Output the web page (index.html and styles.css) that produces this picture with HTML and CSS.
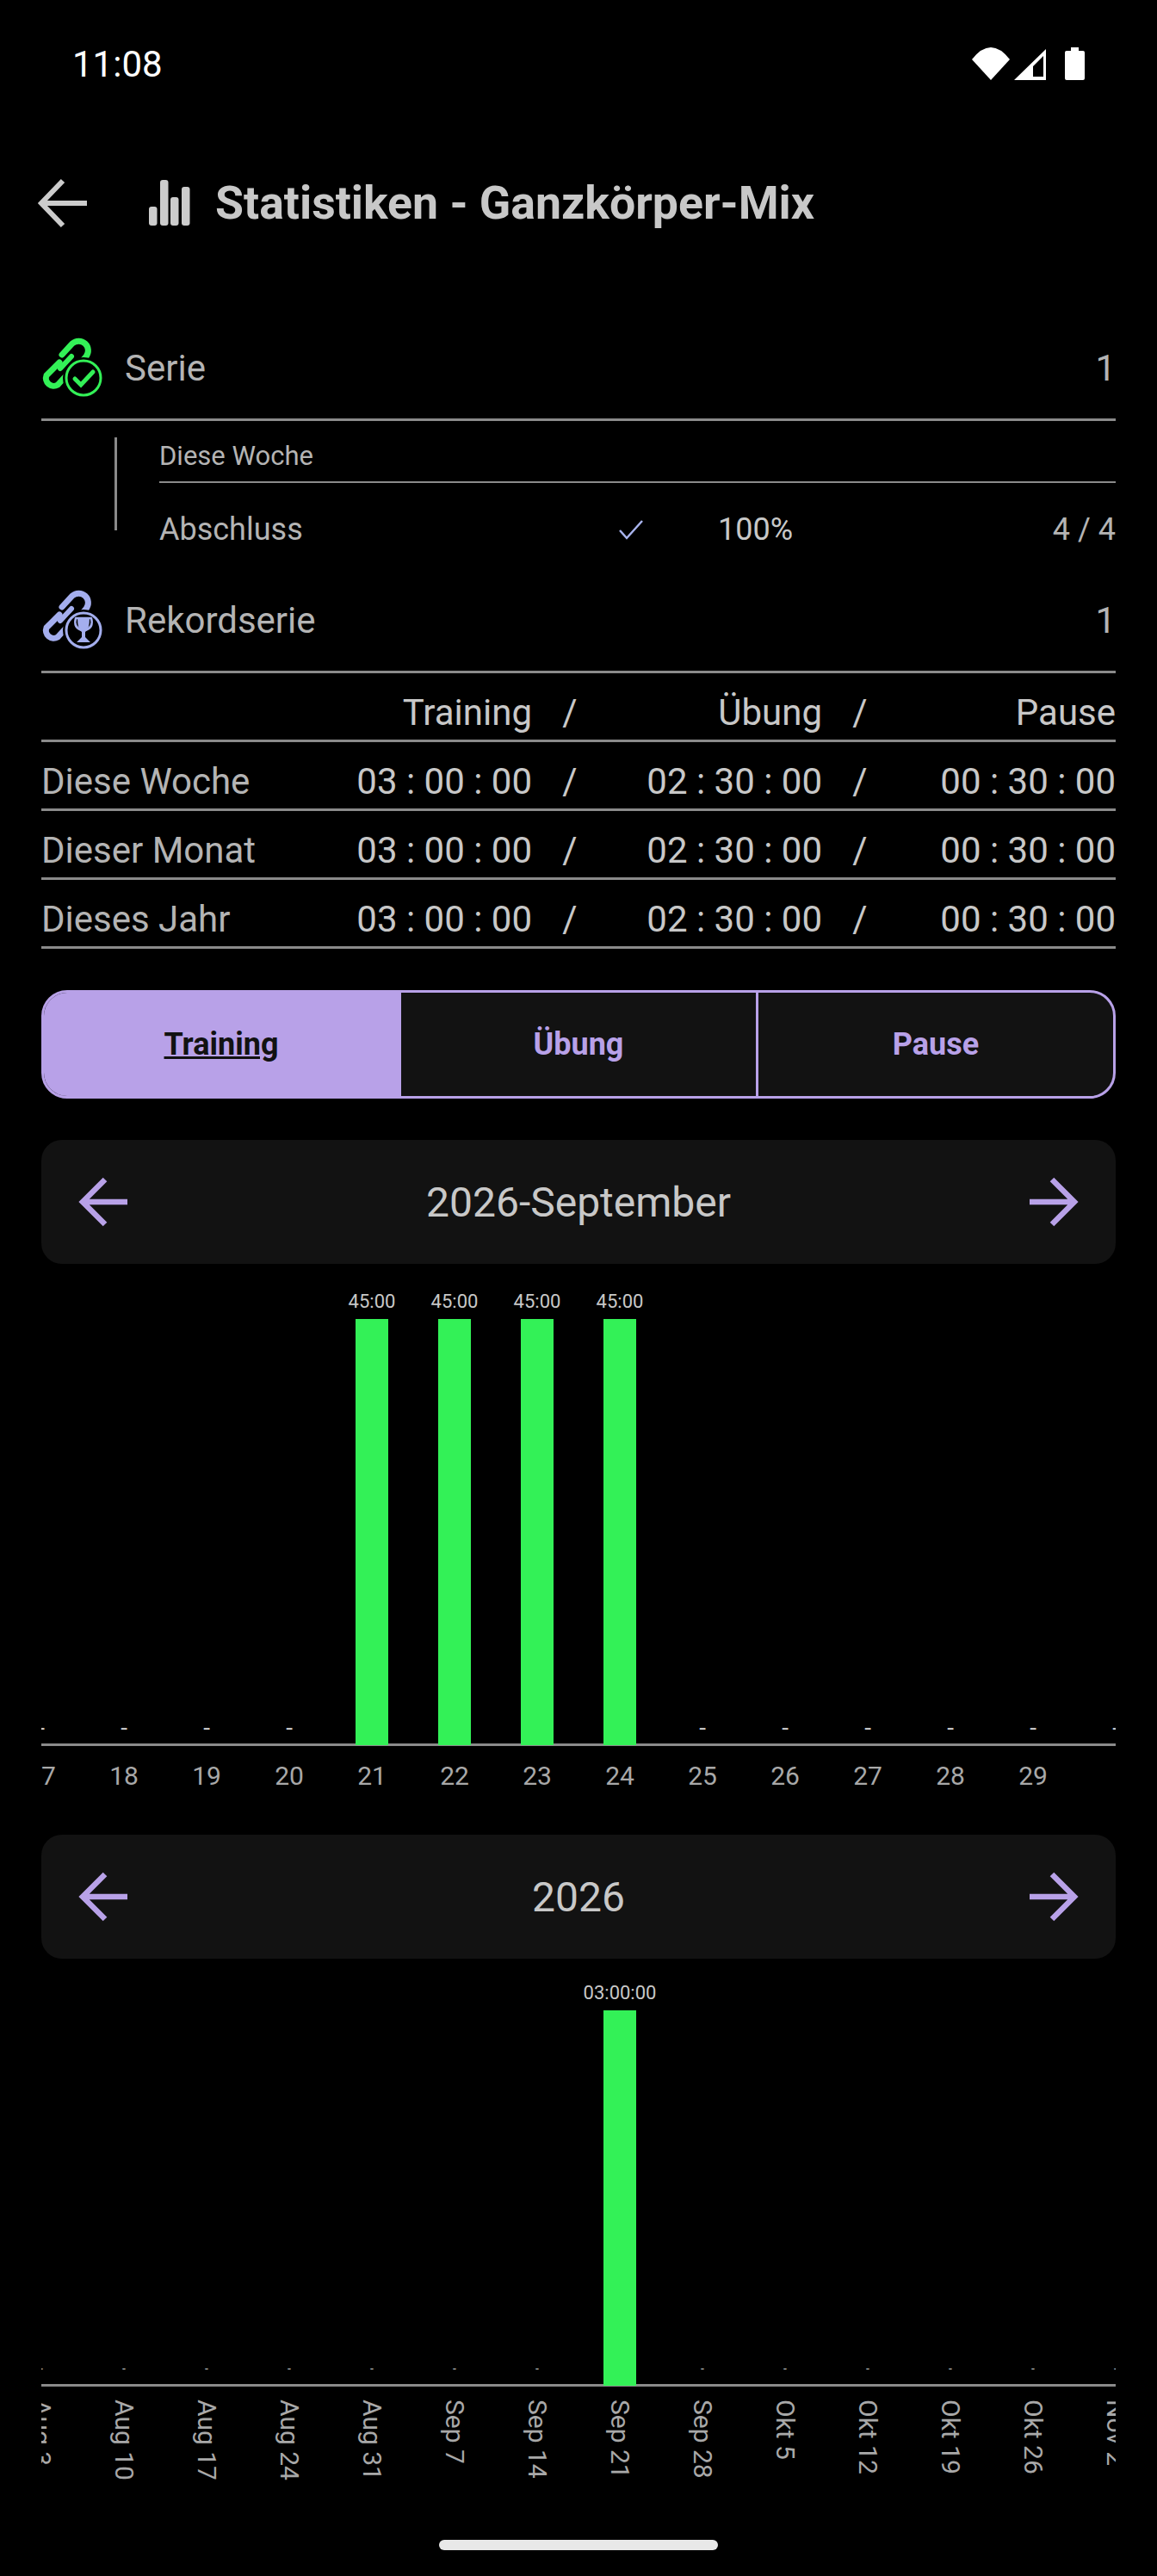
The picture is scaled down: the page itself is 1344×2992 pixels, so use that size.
FILE: index.html
```html
<!DOCTYPE html>
<html lang="de">
<head>
  <meta charset="UTF-8">
  <title>Statistiken - Ganzkörper-Mix</title>
  <link rel="stylesheet" href="styles.css">
</head>
<body>

  <!-- Statusleiste -->
  <div class="status-bar">
    <span class="clock">11:08</span>
    <svg class="status-icons" width="131" height="38" viewBox="0 0 131 38">
      <path d="M0 14 Q22 -14 44 14 L22 38 Z" fill="#fff"/>
      <path d="M49 38 L86 2 V38 Z M83 34 V10 L71 22 V34 Z" fill="#fff" fill-rule="evenodd"/>
      <path d="M115 0 H124 V4 H129 Q131 4 131 6 V36 Q131 38 129 38 H110 Q108 38 108 36 V6 Q108 4 110 4 H115 Z" fill="#fff"/>
    </svg>
  </div>

  <!-- Titel -->
  <div class="top-bar">
    <svg class="back" width="60" height="58" viewBox="0 0 60 58">
      <path d="M59 29 H7 M31 3 L6 29 L31 55" fill="none" stroke="#cccccc" stroke-width="6"/>
    </svg>
    <svg class="title-icon" width="48" height="56" viewBox="0 0 48 56">
      <rect x="0" y="32" width="9.5" height="22" rx="3" fill="#cccccc"/>
      <rect x="13" y="1" width="9.5" height="53" rx="3" fill="#cccccc"/>
      <rect x="25" y="21" width="9.5" height="33" rx="3" fill="#cccccc"/>
      <rect x="38" y="9" width="9.5" height="45" rx="3" fill="#cccccc"/>
    </svg>
    <h1>Statistiken - Ganzkörper-Mix</h1>
  </div>

  <div class="content">

    <div class="stat-row first-row">
      <svg class="stat-icon" width="72" height="70" viewBox="0 0 72 70">
        <g fill="none" stroke="#33f157" stroke-linecap="round">
          <path d="M24 20 L36 7 A11 11 0 0 1 52 22 L41 35" stroke-width="7"/>
          <path d="M21 29 L6 44 A9 9 0 0 0 19 55 L30 43" stroke-width="7"/>
          <path d="M22 36 L35 22" stroke-width="6"/>
          <circle cx="49" cy="47" r="21" fill="#000" stroke="#000" stroke-width="6"/>
          <circle cx="49" cy="47" r="20" stroke-width="3"/>
          <path d="M39 48 L46 55 L60 40" stroke-width="5"/>
        </g>
      </svg>
      <span class="stat-label">Serie</span>
      <span class="stat-value">1</span>
    </div>

    <div class="week-box">
      <div class="week-rule"></div>
      <div class="week-body">
        <div class="week-title">Diese Woche</div>
        <div class="week-row">
          <span class="week-name">Abschluss</span>
          <svg class="check" width="30" height="24" viewBox="0 0 30 24">
            <path d="M2 13 L10 22 L28 2" fill="none" stroke="#a9b4ee" stroke-width="2.5"/>
          </svg>
          <span class="week-percent">100%</span>
          <span class="week-count">4 / 4</span>
        </div>
      </div>
    </div>

    <div class="stat-row">
      <svg class="stat-icon" width="72" height="70" viewBox="0 0 72 70">
        <g fill="none" stroke="#a4aeee" stroke-linecap="round">
          <path d="M24 20 L36 7 A11 11 0 0 1 52 22 L41 35" stroke-width="7"/>
          <path d="M21 29 L6 44 A9 9 0 0 0 19 55 L30 43" stroke-width="7"/>
          <path d="M22 36 L35 22" stroke-width="6"/>
          <circle cx="49" cy="47" r="21" fill="#000" stroke="#000" stroke-width="6"/>
          <circle cx="49" cy="47" r="20" stroke-width="3"/>
          <path d="M40 33 H58 M40 33 Q37 44 47 47 M58 33 Q61 44 51 47" stroke-width="2.5"/>
        </g>
        <path d="M42 33 H56 Q56 46 51 49 L51 55 L57 61 H41 L47 55 L47 49 Q42 46 42 33 Z" fill="#a4aeee"/>
      </svg>
      <span class="stat-label">Rekordserie</span>
      <span class="stat-value">1</span>
    </div>

    <!-- Zeiten -->
    <div class="time-table">
      <div class="time-row">
        <span></span><span class="num">Training</span><span class="slash">/</span><span class="num">Übung</span><span class="slash">/</span><span class="num">Pause</span>
      </div>
      <div class="time-row">
        <span class="dim">Diese Woche</span><span class="num">03 : 00 : 00</span><span class="slash">/</span><span class="num">02 : 30 : 00</span><span class="slash">/</span><span class="num">00 : 30 : 00</span>
      </div>
      <div class="time-row">
        <span class="dim">Dieser Monat</span><span class="num">03 : 00 : 00</span><span class="slash">/</span><span class="num">02 : 30 : 00</span><span class="slash">/</span><span class="num">00 : 30 : 00</span>
      </div>
      <div class="time-row">
        <span class="dim">Dieses Jahr</span><span class="num">03 : 00 : 00</span><span class="slash">/</span><span class="num">02 : 30 : 00</span><span class="slash">/</span><span class="num">00 : 30 : 00</span>
      </div>
    </div>

    <!-- Umschalter -->
    <div class="tabs">
      <div class="tab active">Training</div>
      <div class="tab">Übung</div>
      <div class="tab">Pause</div>
    </div>

    <div class="nav-card month-nav">
      <svg width="60" height="58" viewBox="0 0 60 58"><path d="M58 29 H7 M32 3 L6 29 L32 55" fill="none" stroke="#b8a1e8" stroke-width="6.5"/></svg>
      <span>2026-September</span>
      <svg width="60" height="58" viewBox="0 0 60 58"><path d="M2 29 H53 M28 3 L54 29 L28 55" fill="none" stroke="#b8a1e8" stroke-width="6.5"/></svg>
    </div>

    <!-- Monatsdiagramm -->
    <div class="chart month-chart">
      <div class="bars">
        <div class="col"><span class="dash">-</span></div>
        <div class="col"><span class="dash">-</span></div>
        <div class="col"><span class="dash">-</span></div>
        <div class="col"><span class="dash">-</span></div>
        <div class="col"><span class="val">45:00</span><div class="bar"></div></div>
        <div class="col"><span class="val">45:00</span><div class="bar"></div></div>
        <div class="col"><span class="val">45:00</span><div class="bar"></div></div>
        <div class="col"><span class="val">45:00</span><div class="bar"></div></div>
        <div class="col"><span class="dash">-</span></div>
        <div class="col"><span class="dash">-</span></div>
        <div class="col"><span class="dash">-</span></div>
        <div class="col"><span class="dash">-</span></div>
        <div class="col"><span class="dash">-</span></div>
        <div class="col"><span class="dash">-</span></div>
      </div>
      <div class="labels">
        <span>17</span><span>18</span><span>19</span><span>20</span><span>21</span><span>22</span><span>23</span><span>24</span><span>25</span><span>26</span><span>27</span><span>28</span><span>29</span><span></span>
      </div>
    </div>

    <div class="nav-card">
      <svg width="60" height="58" viewBox="0 0 60 58"><path d="M58 29 H7 M32 3 L6 29 L32 55" fill="none" stroke="#b8a1e8" stroke-width="6.5"/></svg>
      <span>2026</span>
      <svg width="60" height="58" viewBox="0 0 60 58"><path d="M2 29 H53 M28 3 L54 29 L28 55" fill="none" stroke="#b8a1e8" stroke-width="6.5"/></svg>
    </div>

    <!-- Jahresdiagramm -->
    <div class="chart year-chart">
      <div class="bars">
        <div class="col"><span class="dash">-</span></div>
        <div class="col"><span class="dash">-</span></div>
        <div class="col"><span class="dash">-</span></div>
        <div class="col"><span class="dash">-</span></div>
        <div class="col"><span class="dash">-</span></div>
        <div class="col"><span class="dash">-</span></div>
        <div class="col"><span class="dash">-</span></div>
        <div class="col"><span class="val">03:00:00</span><div class="bar"></div></div>
        <div class="col"><span class="dash">-</span></div>
        <div class="col"><span class="dash">-</span></div>
        <div class="col"><span class="dash">-</span></div>
        <div class="col"><span class="dash">-</span></div>
        <div class="col"><span class="dash">-</span></div>
        <div class="col"><span class="dash">-</span></div>
      </div>
      <div class="labels turned">
        <span>Aug 3</span><span>Aug 10</span><span>Aug 17</span><span>Aug 24</span><span>Aug 31</span><span>Sep 7</span><span>Sep 14</span><span>Sep 21</span><span>Sep 28</span><span>Okt 5</span><span>Okt 12</span><span>Okt 19</span><span>Okt 26</span><span>Nov 2</span>
      </div>
    </div>

  </div>

  <div class="home-bar"></div>

</body>
</html>
```

FILE: styles.css
```css
* {
  box-sizing: border-box;
}

html, body {
  margin: 0;
  height: 2992px;
  background-color: #000000;
  overflow: hidden;
}

body {
  font-family: Roboto, "Liberation Sans", sans-serif;
  color: #c8c8c8;
  width: 1344px;
}

.status-bar {
  height: 150px;
  padding: 55px 84px 0 84px;
  display: flex;
  justify-content: space-between;
  align-items: flex-start;
}

.clock {
  font-size: 42px;
  line-height: 40px;
  color: #ffffff;
}

.top-bar {
  height: 172px;
  padding: 57px 0 0 42px;
  display: flex;
  align-items: flex-start;
}

.title-icon {
  margin-left: 71px;
  margin-top: 1px;
}

.top-bar h1 {
  margin: 0 0 0 29px;
  font-size: 53.6px;
  line-height: 58px;
  font-weight: 700;
  color: #c8c8c8;
}

.content {
  padding: 0 48px;
}

.stat-row {
  height: 95px;
  display: flex;
  align-items: center;
  border-bottom: 3px solid #8a8a8a;
  padding-bottom: 26px;
  font-size: 42px;
  color: #b4b4b4;
}

.first-row {
  margin-top: 72px;
}

.stat-icon {
  flex: none;
}

.stat-label {
  margin-left: 25px;
  flex: 1;
}

.week-box {
  height: 198px;
  padding: 19px 0 0 85px;
  display: flex;
}

.week-rule {
  width: 3px;
  height: 108px;
  background-color: #8a8a8a;
}

.week-body {
  margin-left: 49px;
  flex: 1;
}

.week-title {
  height: 53px;
  line-height: 43px;
  font-size: 31px;
  color: #b4b4b4;
  border-bottom: 2px solid #8a8a8a;
}

.week-row {
  display: flex;
  align-items: center;
  height: 56px;
  margin-top: 26px;
  font-size: 36px;
  color: #b4b4b4;
}

.week-name {
  width: 533px;
}

.check {
  flex: none;
}

.week-percent {
  margin-left: 86px;
  color: #c8c8c8;
}

.week-count {
  margin-left: auto;
}

.time-table {
  font-size: 42px;
}

.time-row {
  height: 80px;
  display: grid;
  grid-template-columns: 310px 260px 88px 249px 88px 253px;
  align-items: center;
  border-bottom: 3px solid #8a8a8a;
  padding-top: 14px;
}

.num {
  text-align: right;
}

.slash {
  text-align: center;
}

.dim {
  color: #b4b4b4;
}

.tabs {
  margin-top: 48px;
  height: 126px;
  display: flex;
  border: 3px solid #b8a1e8;
  border-radius: 30px;
  overflow: hidden;
  background-color: #121212;
}

.tab {
  flex: 1;
  display: flex;
  align-items: center;
  justify-content: center;
  font-size: 36px;
  font-weight: 700;
  color: #b8a1e8;
  border-left: 3px solid #b8a1e8;
}

.tab.active {
  border-left: none;
  background-color: #b8a1e8;
  color: #121212;
  text-decoration: underline;
}

.nav-card {
  height: 144px;
  background-color: #121212;
  border-radius: 24px;
  display: flex;
  align-items: center;
  justify-content: space-between;
  padding: 0 42px;
  font-size: 48px;
  color: #c8c8c8;
}

.month-nav {
  margin-top: 48px;
}

.chart {
  overflow: hidden;
}

.bars {
  display: flex;
  align-items: flex-end;
  margin-left: -48px;
  border-bottom: 3px solid #8a8a8a;
}

.col {
  flex: none;
  width: 96px;
  display: flex;
  flex-direction: column;
  align-items: center;
  justify-content: flex-end;
}

.bar {
  width: 38px;
  margin-bottom: -2px;
  background-color: #33f157;
}

.val {
  font-size: 22px;
  line-height: 28px;
  margin-bottom: 6px;
  color: #c8c8c8;
}

.dash {
  font-size: 28px;
  line-height: 28px;
  margin-bottom: 4px;
  color: #c8c8c8;
}

.month-chart .bars {
  height: 560px;
}

.month-chart .bar {
  height: 495px;
}

.year-chart .bars {
  height: 497px;
}

.year-chart .bar {
  height: 436px;
}

.year-chart .dash {
  font-size: 14px;
  margin-bottom: 4px;
}

.labels {
  display: flex;
  margin-left: -48px;
  font-size: 30px;
  color: #a8a8a8;
}

.labels span {
  flex: none;
  width: 96px;
  text-align: center;
}

.month-chart .labels {
  height: 103px;
  padding-top: 17px;
}

.labels.turned {
  height: 118px;
  padding-top: 15px;
  overflow: hidden;
}

.labels.turned span {
  writing-mode: vertical-rl;
  display: flex;
  align-items: center;
  height: 103px;
}

.home-bar {
  position: absolute;
  left: 510px;
  top: 2950px;
  width: 324px;
  height: 12px;
  border-radius: 6px;
  background-color: #e8e8e8;
}
```
